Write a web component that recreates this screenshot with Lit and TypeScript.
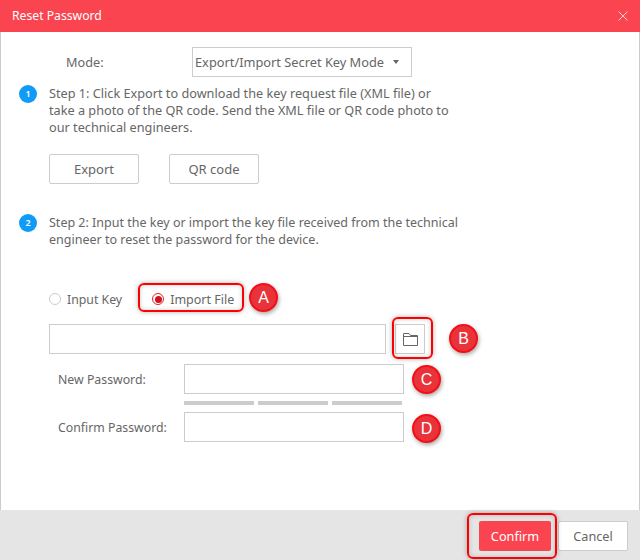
import { LitElement, html, css } from "lit";
import { customElement } from "lit/decorators.js";

@customElement("app-root")
export class AppRoot extends LitElement {
  static styles = css`
    :host { display: block; width: 640px; height: 560px; position: relative; overflow: hidden; background: #fff;
      font-family: "Noto Sans", "Open Sans", sans-serif; font-size: 12.7px; color: #666; box-sizing: border-box; }
    * { box-sizing: border-box; }
    .dialog { display: flex; flex-direction: column; height: 560px; }
    .head { height: 32px; flex: none; background: #fa4550; color: #fff; display: flex; align-items: center; justify-content: space-between; padding: 0 12px 1px; font-size: 12.2px; }
    .close { display: block; }
    .body { flex: 1; border-left: 1px solid #ccc; border-right: 1px solid #ccc; padding: 15px 0 0 48px; display: flex; flex-direction: column; }
    .mode { display: flex; align-items: center; height: 30px; padding-left: 17px; }
    .mode .lbl { width: 126px; }
    .select { width: 220px; height: 30px; border: 1px solid #ccc; display: flex; align-items: center; padding-left: 2px; gap: 9px; white-space: nowrap; font-size: 12.8px; }
    .caret { width: 0; height: 0; border: 3.5px solid transparent; border-top: 4px solid #666; border-bottom: 0; }
    .step { position: relative; width: 440px; line-height: 17px; }
    .s1 { margin-top: 8px; }
    .s2 { margin-top: 30px; font-size: 12.5px; }
    .num { position: absolute; left: -30px; top: 0; width: 18px; height: 18px; border-radius: 50%; background: #0f9bf7; color: #fff; font-size: 9px; font-weight: 600; line-height: 18px; text-align: center; }
    .btns { display: flex; gap: 30px; margin-top: 18px; }
    .btn { width: 90px; height: 30px; border: 1px solid #ccc; border-radius: 2px; display: flex; align-items: center; justify-content: center; background: #fff; font-size: 13px; padding-bottom: 1px; }
    .radios { display: flex; align-items: center; margin-top: 41px; height: 20px; font-size: 12.3px; }
    .radio { display: flex; align-items: center; gap: 6px; }
    .radio.b { margin-left: 30px; font-size: 12.5px; }
    .dot { width: 12px; height: 12px; border-radius: 50%; border: 1px solid #ccc; background: #fff; }
    .dot.on { border-color: #e3212b; display: flex; align-items: center; justify-content: center; }
    .dot.on::after { content: ""; width: 7px; height: 7px; border-radius: 50%; background: #d0121c; }
    .file { display: flex; gap: 9px; margin-top: 15px; }
    .input { height: 30px; border: 1px solid #ccc; background: #fff; }
    .file .input { width: 337px; }
    .folder { width: 30px; height: 30px; flex: none; border: 1px solid #ccc; display: flex; align-items: center; justify-content: center; }
    .folder svg { display: block; }
    .row { display: flex; align-items: center; margin-top: 10px; padding-left: 9px; }
    .row .lbl { width: 126px; font-size: 12.3px; }
    .row .input { width: 220px; }
    .bars { display: flex; gap: 4px; margin: 7px 0 0 135px; }
    .bars i { width: 70px; height: 4px; background: #ccc; }
    .row.last { margin-top: 7px; }
    .foot { height: 50px; flex: none; background: #e5e5e5; display: flex; justify-content: flex-end; align-items: center; gap: 7px; padding: 1px 12px 0 0; }
    .confirm { width: 72px; height: 30px; background: #fa4550; color: #fff; border-radius: 2px; display: flex; align-items: center; justify-content: center; }
    .cancel { width: 70px; height: 30px; background: #fff; border: 1px solid #ccc; border-radius: 2px; display: flex; align-items: center; justify-content: center; }
    .hl { position: absolute; border: 2px solid #f00; border-radius: 6px; box-shadow: 0 0 5px rgba(0,0,0,.3), inset 0 0 5px rgba(0,0,0,.18); }
    .hl-a { left: 138px; top: 283px; width: 106px; height: 29px; }
    .hl-b { left: 392px; top: 317px; width: 41px; height: 42px; }
    .hl-c { left: 467px; top: 513px; width: 90px; height: 46px; }
    .badge { position: absolute; width: 29px; height: 29px; border-radius: 50%; background: #e8333a; border: 2px solid #f40f17; color: #fff; font-family: "Liberation Sans", sans-serif; font-size: 16px; display: flex; align-items: center; justify-content: center; box-shadow: 1px 2px 4px rgba(0,0,0,.35); }
    .ba { left: 249px; top: 283px; }
    .bb { left: 449px; top: 324px; }
    .bc { left: 412px; top: 365px; }
    .bd { left: 412px; top: 414px; }
  `;
  render() {
    return html`
      <div class="dialog">
        <div class="head"><span>Reset Password</span>
          <svg class="close" width="10" height="10" viewBox="0 0 10 10" stroke="#fff" stroke-opacity=".75" fill="none"><path d="M.5.5l9 9M9.5.5l-9 9"/></svg>
        </div>
        <div class="body">
          <div class="mode"><span class="lbl">Mode:</span>
            <div class="select">Export/Import Secret Key Mode<span class="caret"></span></div></div>
          <div class="step s1"><span class="num">1</span>Step 1: Click Export to download the key request file (XML file) or<br>take a photo of the QR code. Send the XML file or QR code photo to<br>our technical engineers.</div>
          <div class="btns"><div class="btn">Export</div><div class="btn">QR code</div></div>
          <div class="step s2"><span class="num">2</span>Step 2: Input the key or import the key file received from the technical<br>engineer to reset the password for the device.</div>
          <div class="radios">
            <div class="radio"><span class="dot"></span>Input Key</div>
            <div class="radio b"><span class="dot on"></span>Import File</div>
          </div>
          <div class="file"><div class="input"></div>
            <div class="folder"><svg width="15" height="13" viewBox="0 0 15 13" fill="none" stroke="#666"><path d="M.5 12.5V.5h5.5l1.5 2h7v10zM.5 3.5h14"/></svg></div></div>
          <div class="row"><span class="lbl">New Password:</span><div class="input"></div></div>
          <div class="bars"><i></i><i></i><i></i></div>
          <div class="row last"><span class="lbl">Confirm Password:</span><div class="input"></div></div>
        </div>
        <div class="foot"><div class="confirm">Confirm</div><div class="cancel">Cancel</div></div>
      </div>
      <div class="hl hl-a"></div><div class="hl hl-b"></div><div class="hl hl-c"></div>
      <div class="badge ba">A</div><div class="badge bb">B</div><div class="badge bc">C</div><div class="badge bd">D</div>
    `;
  }
}
